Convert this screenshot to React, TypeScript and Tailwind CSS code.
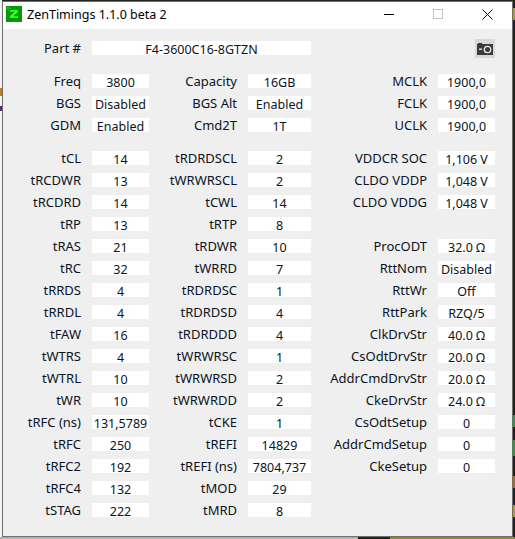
// App.tsx
const FONT = "font-['Noto_Sans','Open_Sans',sans-serif]";

type Cell = [string, string] | null;

const ROWS: [Cell, Cell, Cell][] = [
  [['Freq', '3800'], ['Capacity', '16GB'], ['MCLK', '1900,0']],
  [['BGS', 'Disabled'], ['BGS Alt', 'Enabled'], ['FCLK', '1900,0']],
  [['GDM', 'Enabled'], ['Cmd2T', '1T'], ['UCLK', '1900,0']],
];

const TIMINGS: [Cell, Cell, Cell][] = [
  [['tCL', '14'], ['tRDRDSCL', '2'], ['VDDCR SOC', '1,106 V']],
  [['tRCDWR', '13'], ['tWRWRSCL', '2'], ['CLDO VDDP', '1,048 V']],
  [['tRCDRD', '14'], ['tCWL', '14'], ['CLDO VDDG', '1,048 V']],
  [['tRP', '13'], ['tRTP', '8'], null],
  [['tRAS', '21'], ['tRDWR', '10'], ['ProcODT', '32.0 Ω']],
  [['tRC', '32'], ['tWRRD', '7'], ['RttNom', 'Disabled']],
  [['tRRDS', '4'], ['tRDRDSC', '1'], ['RttWr', 'Off']],
  [['tRRDL', '4'], ['tRDRDSD', '4'], ['RttPark', 'RZQ/5']],
  [['tFAW', '16'], ['tRDRDDD', '4'], ['ClkDrvStr', '40.0 Ω']],
  [['tWTRS', '4'], ['tWRWRSC', '1'], ['CsOdtDrvStr', '20.0 Ω']],
  [['tWTRL', '10'], ['tWRWRSD', '2'], ['AddrCmdDrvStr', '20.0 Ω']],
  [['tWR', '10'], ['tWRWRDD', '2'], ['CkeDrvStr', '24.0 Ω']],
  [['tRFC (ns)', '131,5789'], ['tCKE', '1'], ['CsOdtSetup', '0']],
  [['tRFC', '250'], ['tREFI', '14829'], ['AddrCmdSetup', '0']],
  [['tRFC2', '192'], ['tREFI (ns)', '7804,737'], ['CkeSetup', '0']],
  [['tRFC4', '132'], ['tMOD', '29'], null],
  [['tSTAG', '222'], ['tMRD', '8'], null],
];

function Label({ text }: { text: string }) {
  return <div className="h-[14px] flex items-center justify-end whitespace-nowrap text-[13px] leading-[14px] text-[#0a1424]">{text}</div>;
}

function Value({ text }: { text: string }) {
  return (
    <div className="h-[14px] bg-white flex items-center justify-center whitespace-nowrap text-[12.5px] leading-[14px] text-[#0a1424]">
      <span className="translate-y-[2px]">{text}</span>
    </div>
  );
}

function Pair({ cell }: { cell: Cell }) {
  if (!cell) return <><div /><div /></>;
  return (
    <>
      <Label text={cell[0]} />
      <Value text={cell[1]} />
    </>
  );
}

function Row({ cells }: { cells: [Cell, Cell, Cell] }) {
  return (
    <div className="grid grid-cols-[68px_57px_77px_63px_105px_57px] gap-x-[11px] h-[14px]">
      <Pair cell={cells[0]} />
      <Pair cell={cells[1]} />
      <Pair cell={cells[2]} />
    </div>
  );
}

function Logo() {
  return (
    <svg width="16" height="16" viewBox="0 0 16 16" className="shrink-0">
      <rect width="16" height="16" fill="#009c00" />
      <rect x="1" y="1" width="2" height="2" fill="#2fc02f" />
      <rect x="4" y="2" width="1" height="1" fill="#2fc02f" />
      <rect x="2" y="4" width="1" height="1" fill="#2fc02f" />
      <path d="M4 4h8v2L7.4 10.2H12V12H4v-2l4.6-4.2H4z" fill="#3cf03c" />
    </svg>
  );
}

function Camera() {
  return (
    <svg width="16" height="12" viewBox="0 0 16 12">
      <path d="M0 1h1V0h4v1h11v11H0z" fill="#3b3b3b" />
      <rect x="2" y="5.5" width="3" height="1.4" fill="#e8e8e8" />
      <circle cx="10.5" cy="6.5" r="3.2" fill="none" stroke="#e8e8e8" strokeWidth="1.3" />
    </svg>
  );
}

export default function App() {
  return (
    <div className={`relative w-[515px] h-[539px] bg-[#23231e] overflow-hidden pl-[2px] pt-px ${FONT}`}>
      {/* desktop behind the window */}
      <div className="absolute left-0 top-0 w-[2px] h-[539px] bg-[#f4f4f4]" />
      <div className="absolute left-0 top-[88px] w-[2px] h-[8px] bg-[#c77a20]" />
      <div className="absolute left-0 top-[106px] w-[2px] h-[5px] bg-[#5a2a80]" />
      <div className="absolute left-0 top-[537px] w-[358px] h-[2px] bg-[#b4b4a4]" />
      <div className="absolute left-[390px] top-[537px] w-[125px] h-[2px] bg-[#8a8a30]" />
      <div className="absolute left-[513px] top-[8px] w-[2px] h-[12px] bg-[#a0a030]" />
      <div className="absolute left-[513px] top-[415px] w-[2px] h-[12px] bg-[#2a9a3a]" />
      <div className="absolute left-[513px] top-[440px] w-[2px] h-[16px] bg-[#2a9a3a]" />
      <div className="absolute left-[513px] top-[476px] w-[2px] h-[12px] bg-[#a86c28]" />
      <div className="absolute left-[513px] top-[505px] w-[2px] h-[12px] bg-[#a0a030]" />

      <div className="relative w-[511px] h-[536px] border border-[#6e6e6e] bg-[#efefef] flex flex-col">
        <div className="h-[27px] bg-white flex items-center pl-[3px] shrink-0">
          <div className="self-start pt-[4px]"><Logo /></div>
          <span className="ml-[5px] text-[12.5px] leading-none text-black whitespace-nowrap">ZenTimings 1.1.0 beta 2</span>
          <div className="ml-auto mr-[19px] mb-[3px] flex items-center gap-[39px]">
            <div className="w-[10px] h-px bg-black" />
            <div className="w-[10px] h-[10px] border border-[#c4c4c4]" />
            <svg width="11" height="11" viewBox="0 0 11 11"><path d="M.5.5l10 10M10.5.5l-10 10" stroke="#111" strokeWidth="1" /></svg>
          </div>
        </div>

        <div className="pl-[10px] pt-[10px] flex flex-col">
          <div className="flex items-start h-[20px]">
            <div className="w-[68px] mt-[2px]"><Label text="Part #" /></div>
            <div className="ml-[11px] w-[219px] mt-[2px]"><Value text="F4-3600C16-8GTZN" /></div>
            <button className="ml-[164px] w-[20px] h-[19px] bg-[#d8d8d8] flex items-center justify-center"><Camera /></button>
          </div>

          <div className="mt-[15px] flex flex-col gap-[8px]">
            {ROWS.map((r, i) => <Row key={i} cells={r} />)}
          </div>

          <div className="mt-[19px] flex flex-col gap-[8px]">
            {TIMINGS.map((r, i) => <Row key={i} cells={r} />)}
          </div>
        </div>
      </div>
    </div>
  );
}
